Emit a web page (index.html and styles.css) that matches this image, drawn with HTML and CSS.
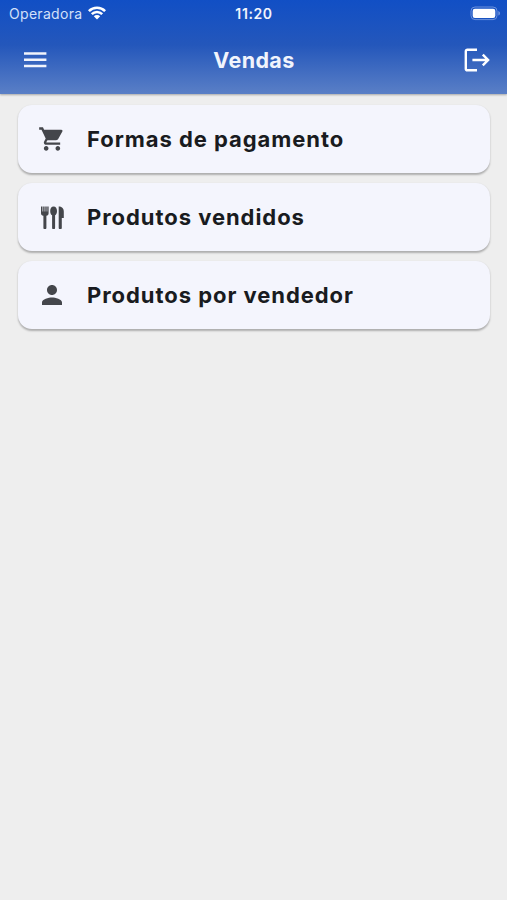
FILE: index.html
```html
<!DOCTYPE html>
<html lang="pt-BR">
  <head>
    <meta charset="utf-8" />
    <title>Vendas</title>
    <link rel="stylesheet" href="styles.css">
  </head>
  <body>
    <header class="header">
      <div class="status">
        <div class="carrier">
          <span>Operadora</span>
          <svg class="wifi" viewBox="0 0 20 15">
            <path d="M1.9 6.1a11.6 11.6 0 0 1 16.2 0M4.8 9.1a7.4 7.4 0 0 1 10.4 0" />
            <path class="dot" d="M10 14.6 6.8 11.3a4.6 4.6 0 0 1 6.4 0z" />
          </svg>
        </div>
        <time class="clock">11:20</time>
        <svg class="battery" viewBox="0 0 31 15">
          <rect class="shell" x="1" y="1" width="26" height="12.6" rx="4" />
          <rect class="charge" x="2.7" y="2.7" width="22.6" height="9.2" rx="2.2" />
          <path class="tip" d="M28.3 5v4.6c2.4-.8 2.4-3.8 0-4.6z" />
        </svg>
      </div>
      <nav class="toolbar">
        <svg class="menu" viewBox="0 0 23 16">
          <path d="M0 1.6h22.4M0 7.8h22.4M0 14h22.4" />
        </svg>
        <h1>Vendas</h1>
        <svg class="exit" viewBox="0 0 26 24">
          <path d="M13 1.7H3.4a1.6 1.6 0 0 0-1.6 1.6v17.4a1.6 1.6 0 0 0 1.6 1.6H13M8.4 12h15.8M18.8 6.7 24.1 12l-5.3 5.3" />
        </svg>
      </nav>
    </header>
    <main class="list">
      <a class="card">
        <span class="icon">
          <svg class="cart" viewBox="0 0 24 24">
            <path d="M7 18c-1.1 0-1.99.9-1.99 2S5.9 22 7 22s2-.9 2-2-.9-2-2-2zM1 2v2h2l3.6 7.59-1.35 2.45c-.16.28-.25.61-.25.96 0 1.1.9 2 2 2h12v-2H7.42c-.14 0-.25-.11-.25-.25l.03-.12.9-1.63h7.45c.75 0 1.41-.41 1.75-1.03l3.58-6.49A1 1 0 0 0 20 4H5.21l-.94-2H1zm16 16c-1.1 0-1.99.9-1.99 2s.89 2 1.99 2 2-.9 2-2-.9-2-2-2z" />
          </svg>
        </span>
        <span class="label">Formas de pagamento</span>
      </a>
      <a class="card">
        <span class="icon">
          <svg class="cutlery" viewBox="0 0 23 23">
            <path d="M0 .6h1.5v5h.7v-5h1.4v5h.7v-5h1.4v5h.6v-5h1.3v6.600c0 1.500-.8 2.300-2.200 2.600V21.800a1.500 1.500 0 0 1-3 0V9.800C.8 9.500 0 8.700 0 7.200z" />
            <path d="M12.600.4c2.200 0 3.400 2 3.400 4.500 0 2.200-.8 3.800-1.900 4.400v12.500a1.500 1.500 0 0 1-3 0V9.300c-1.200-.6-1.900-2.200-1.900-4.400 0-2.500 1.200-4.500 3.400-4.500z" />
            <path d="M17.700.6c2.900 0 5.100 1.700 5.100 5v6.400h-2v9.800a1.550 1.500 0 0 1-3.100 0z" />
          </svg>
        </span>
        <span class="label">Produtos vendidos</span>
      </a>
      <a class="card">
        <span class="icon">
          <svg class="person" viewBox="0 0 24 24">
            <path d="M12 12c2.210 0 4-1.790 4-4s-1.790-4-4-4-4 1.790-4 4 1.790 4 4 4zm0 2c-2.670 0-8 1.340-8 4v2h16v-2c0-2.660-5.330-4-8-4z" />
          </svg>
        </span>
        <span class="label">Produtos por vendedor</span>
      </a>
    </main>
  </body>
</html>
```

FILE: styles.css
```css
body {
  margin: 0;
  min-height: 900px;
  background: #eeeeee;
  font-family: Inter, "Liberation Sans", sans-serif;
}

svg {
  display: block;
  fill: none;
}

.header {
  height: 94px;
  background: linear-gradient(#114fc5, #2457bb 48%, #5a7fc6);
  box-shadow: 0 1px 2px rgba(0, 0, 0, 0.3);
  color: #f1f4fc;
}

.status {
  display: grid;
  grid-template-columns: 1fr auto 1fr;
  align-items: center;
  height: 27px;
  padding: 0 6px 0 9px;
}

.carrier {
  display: flex;
  align-items: center;
  gap: 5px;
  font-size: 14px;
  letter-spacing: 0.3px;
  color: #d3e0f9;
}

.wifi {
  width: 20px;
  height: 15px;
  margin-top: -2px;
  stroke: white;
  stroke-width: 2.6;
}

.wifi .dot {
  fill: white;
  stroke: none;
}

.clock {
  margin-left: -2px;
  font-size: 14px;
  font-weight: 600;
  letter-spacing: 0.6px;
}

.battery {
  justify-self: end;
  width: 31px;
  height: 15px;
}

.battery .shell {
  stroke: #6c91dc;
  stroke-width: 1;
}

.battery .charge {
  fill: white;
}

.battery .tip {
  fill: #6c91dc;
}

.toolbar {
  display: grid;
  grid-template-columns: 1fr auto 1fr;
  align-items: center;
  height: 65px;
  padding: 0 17px 0 24px;
}

.toolbar h1 {
  margin: 0 0 0 -6px;
  font-size: 21.5px;
  font-weight: 650;
  letter-spacing: 0.4px;
}

.menu {
  width: 23px;
  height: 16px;
  stroke: #f1f4fc;
  stroke-width: 2.5;
}

.exit {
  justify-self: end;
  width: 26px;
  height: 24px;
  stroke: white;
  stroke-width: 2.4;
}

.list {
  display: flex;
  flex-direction: column;
  gap: 10.2px;
  padding: 11px 17px 0 18px;
}

.card {
  display: flex;
  align-items: center;
  height: 68px;
  border-radius: 14px;
  background: #f4f5fd;
  box-shadow: 0 1.5px 2px rgba(0, 0, 0, 0.27);
  color: #191b20;
}

.icon {
  display: flex;
  justify-content: center;
  width: 68px;
  padding-right: 1px;
}

.icon svg {
  fill: #44464b;
}

.icon .cart {
  margin-right: 1px;
}

.cart {
  width: 28px;
  height: 28px;
}

.cutlery {
  width: 23px;
  height: 23px;
}

.person {
  width: 30px;
  height: 30px;
}

.label {
  font-size: 22px;
  font-weight: 650;
  letter-spacing: 0.95px;
  white-space: nowrap;
}
```
